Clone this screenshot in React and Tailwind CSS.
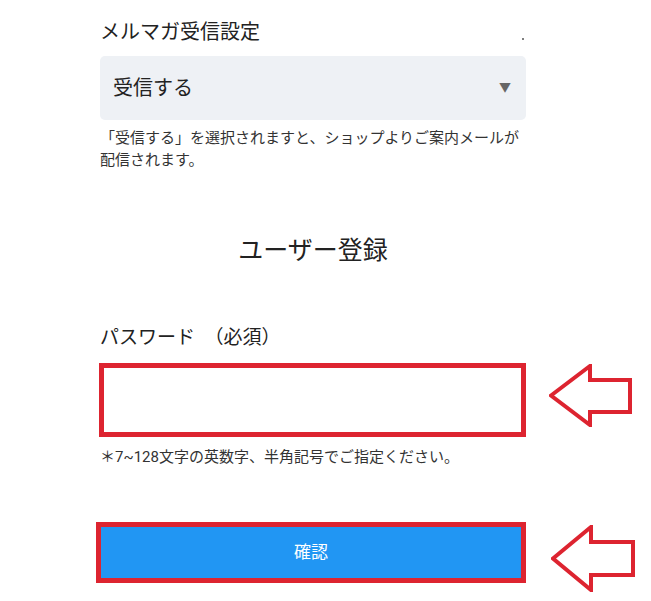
import React from "react";

const FONT = { fontFamily: "Roboto, 'Noto Sans CJK JP', 'Noto Sans', sans-serif" };

// Red annotation arrow pointing left.
function LeftArrow({ h = 59, shaftTop = 14, shaftBottom = 46, head = 39, w = 79 }) {
  const mid = h / 2;
  const pts = [
    [0, mid],
    [head, 0],
    [head, shaftTop],
    [w, shaftTop],
    [w, shaftBottom],
    [head, shaftBottom],
    [head, h],
  ]
    .map(([x, y]) => `${x + 2},${y + 2}`)
    .join(" ");
  return (
    <svg width={w + 4} height={h + 4} viewBox={`0 0 ${w + 4} ${h + 4}`} className="shrink-0">
      <polygon points={pts} fill="none" stroke="#dd2430" strokeWidth="4" strokeLinejoin="miter" />
    </svg>
  );
}

export default function App() {
  return (
    <div className="h-[601px] w-[651px] overflow-hidden bg-white text-[#222]" style={FONT}>
      <div className="pl-[100px]">
        {/* newsletter */}
        <div className="flex w-[426px] items-end justify-between pt-[18px]">
          <p className="text-[20px] leading-[28px]">メルマガ受信設定</p>
          <span className="mb-[6px] mr-[2px] h-[2px] w-[2px] rounded-full bg-[#555]" />
        </div>
        <div className="mt-[10px] flex h-[64px] w-[426px] items-center justify-between rounded-[5px] bg-[#eef1f5] pl-[13px] pr-[15px]">
          <span className="text-[20px]">受信する</span>
          <span className="text-[12px] text-[#666]">▼</span>
        </div>
        <p className="mt-[7px] w-[428px] text-[15px] leading-[22px] text-[#333]">
          「受信する」を選択されますと、ショップよりご案内メールが配信されます。
        </p>

        {/* user registration */}
        <h2 className="mt-[64px] w-[426px] text-center text-[25px] leading-[32px]">ユーザー登録</h2>

        <p className="mt-[57px] text-[19px] leading-[28px]">パスワード　（必須）</p>
        <div className="mt-[11px] -ml-px flex gap-[23px]">
          <input
            type="password"
            className="h-[74px] w-[427px] border-[5px] border-[#dd2430] bg-white px-3 outline-none"
          />
          <div className="mt-[1px]">
            <LeftArrow />
          </div>
        </div>
        <p className="mt-[9px] text-[15px] leading-[22px] text-[#333]">＊7~128文字の英数字、半角記号でご指定ください。</p>

        <div className="mt-[54px] -ml-[4px] flex gap-[25px]">
          <button className="h-[61px] w-[430px] border-[5px] border-[#dd2430] bg-[#2196f3] text-[17px] text-white">
            確認
          </button>
          <div className="mt-[3px]">
            <LeftArrow h={63} shaftTop={15} shaftBottom={48} head={38} w={80} />
          </div>
        </div>
      </div>
    </div>
  );
}
